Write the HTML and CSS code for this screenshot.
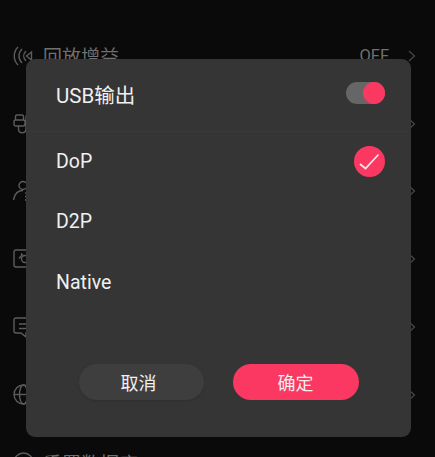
FILE: index.html
```html
<!DOCTYPE html>
<html lang="zh">
<head>
<meta charset="utf-8">
<title>USB输出</title>
<link rel="stylesheet" href="styles.css">
</head>
<body>
<div class="screen">
  <ul class="list">
    <li class="row">
      <svg class="ico" viewBox="0 0 22 22"><path d="M5 2C0 7 0 15 5 20M9 4C5 8 5 14 9 18M13 6C10 9 10 13 13 16"/><path d="M18.500 7L13.500 11L18.500 15Z"/></svg>
      <span class="label">回放增益</span><span class="value">OFF</span>
      <svg class="chev" viewBox="0 0 8 12"><path d="M1 1L6.500 6L1 11"/></svg>
    </li>
    <li class="row">
      <svg class="ico" viewBox="0 0 22 22"><path d="M4 2H9Q10.500 2 10.500 4V7Q12 7 12 9V11Q12 13 10 13H3Q1 13 1 11V9Q1 7 2.500 7V4Q2.500 2 4 2ZM2.500 7H10.500M5.500 13V16C5.500 21 13 21 13 16V4C13 2.500 14 2 15 2"/></svg>
      <span class="label">USB</span>
      <svg class="chev" viewBox="0 0 8 12"><path d="M1 1L6.500 6L1 11"/></svg>
    </li>
    <li class="row">
      <svg class="ico" viewBox="0 0 22 22"><circle cx="10" cy="5.500" r="4"/><path d="M0.500 20C1.500 14 5 10.500 10 10.500M12 13H20M12 16.500H20M12 20H20"/></svg>
      <span class="label">账户</span>
      <svg class="chev" viewBox="0 0 8 12"><path d="M1 1L6.500 6L1 11"/></svg>
    </li>
    <li class="row">
      <svg class="ico" viewBox="0 0 22 22"><path d="M18 2H3Q1 2 1 4V17Q1 19 3 19H18"/><path d="M6 10.500L9 7M8 5.500L10 7"/><circle cx="12" cy="11" r="3.500"/></svg>
      <span class="label">主题</span>
      <svg class="chev" viewBox="0 0 8 12"><path d="M1 1L6.500 6L1 11"/></svg>
    </li>
    <li class="row">
      <svg class="ico" viewBox="0 0 22 22"><path d="M20 2H3Q1 2 1 4V15Q1 17 3 17H8L13 21V17H20M6 8H18M6 12.500H16"/></svg>
      <span class="label">反馈</span>
      <svg class="chev" viewBox="0 0 8 12"><path d="M1 1L6.500 6L1 11"/></svg>
    </li>
    <li class="row">
      <svg class="ico" viewBox="0 0 22 22"><circle cx="10.500" cy="10.500" r="9.500"/><ellipse cx="10.500" cy="10.500" rx="4" ry="9.500"/><path d="M1 10.500H20"/></svg>
      <span class="label">语言</span>
      <svg class="chev" viewBox="0 0 8 12"><path d="M1 1L6.500 6L1 11"/></svg>
    </li>
    <li class="row">
      <svg class="ico" viewBox="0 0 22 22"><circle cx="10.500" cy="10.500" r="9.500"/></svg>
      <span class="label">重置数据库</span>
    </li>
  </ul>

  <section class="dialog">
    <header class="head">
      <span class="title">USB输出</span>
      <span class="toggle"><span class="knob"></span></span>
    </header>
    <div class="options">
      <div class="option">
        <span>DoP</span>
        <span class="check"><svg viewBox="0 0 31 31"><path d="M6 18L11.500 22.500L24.500 8.500"/></svg></span>
      </div>
      <div class="option"><span>D2P</span></div>
      <div class="option"><span>Native</span></div>
    </div>
    <footer class="actions">
      <button class="btn cancel">取消</button>
      <button class="btn ok">确定</button>
    </footer>
  </section>
</div>
</body>
</html>
```
FILE: styles.css
```css
* { box-sizing: border-box; }
html, body { margin: 0; padding: 0; height: 100%; }
body {
  background: #0a0a0a;
  font-family: Roboto, "Noto Sans CJK SC", sans-serif;
  overflow: hidden;
}
.screen {
  position: relative;
  width: 435px;
  height: 457px;
  overflow: hidden;
}
.list {
  list-style: none;
  margin: 0;
  padding: 22px 0 0;
}
.row {
  display: flex;
  align-items: center;
  height: 67.800px;
  padding: 0 19px 0 13px;
  color: #707070;
  font-size: 19px;
}
.ico {
  width: 22px;
  height: 22px;
  flex: none;
  margin-right: 8px;
  fill: none;
  stroke: #5c5c5c;
  stroke-width: 1.400;
}
.label { flex: 1; }
.value { font-size: 16.500px; margin-right: 19px; }
.chev {
  width: 8px;
  height: 12px;
  flex: none;
  fill: none;
  stroke: #484848;
  stroke-width: 1.200;
}
.dialog {
  position: absolute;
  left: 26px;
  top: 59px;
  width: 385px;
  height: 378px;
  background: #353535;
  border-radius: 9px;
  display: flex;
  flex-direction: column;
  color: #f0f0f0;
}
.head {
  height: 73px;
  flex: none;
  display: flex;
  align-items: center;
  justify-content: space-between;
  padding: 0 26px 3px 30px;
  border-bottom: 1px solid #393939;
  font-size: 20.500px;
}
.toggle {
  width: 39px;
  height: 22px;
  margin-bottom: 1px;
  border-radius: 11px;
  background: #666666;
  display: flex;
  justify-content: flex-end;
}
.knob {
  width: 22px;
  height: 22px;
  border-radius: 50%;
  background: #fb3862;
}
.options {
  flex: 1;
  margin-top: -1px;
  display: flex;
  flex-direction: column;
}
.option {
  height: 60.500px;
  flex: none;
  display: flex;
  align-items: center;
  justify-content: space-between;
  padding: 0 26px 0 30px;
  font-size: 19.500px;
}
.check {
  width: 31px;
  height: 31px;
  border-radius: 50%;
  background: #fb3862;
}
.check svg {
  display: block;
  width: 31px;
  height: 31px;
  fill: none;
  stroke: #fbe4ea;
  stroke-width: 1.800;
}
.actions {
  flex: none;
  display: flex;
  gap: 29px;
  padding: 0 0 37px 53px;
}
.btn {
  height: 36px;
  border: 0;
  border-radius: 18px;
  color: #f0f0f0;
  font: 18px "Noto Sans CJK SC", sans-serif;
}
.cancel { width: 125px; padding: 0 6px 0 0; background: #3e3e3e; box-shadow: 0 1px 2px #2e2e2e; }
.ok { width: 126px; padding: 0 1px 0 0; background: #fb3862; }
```
